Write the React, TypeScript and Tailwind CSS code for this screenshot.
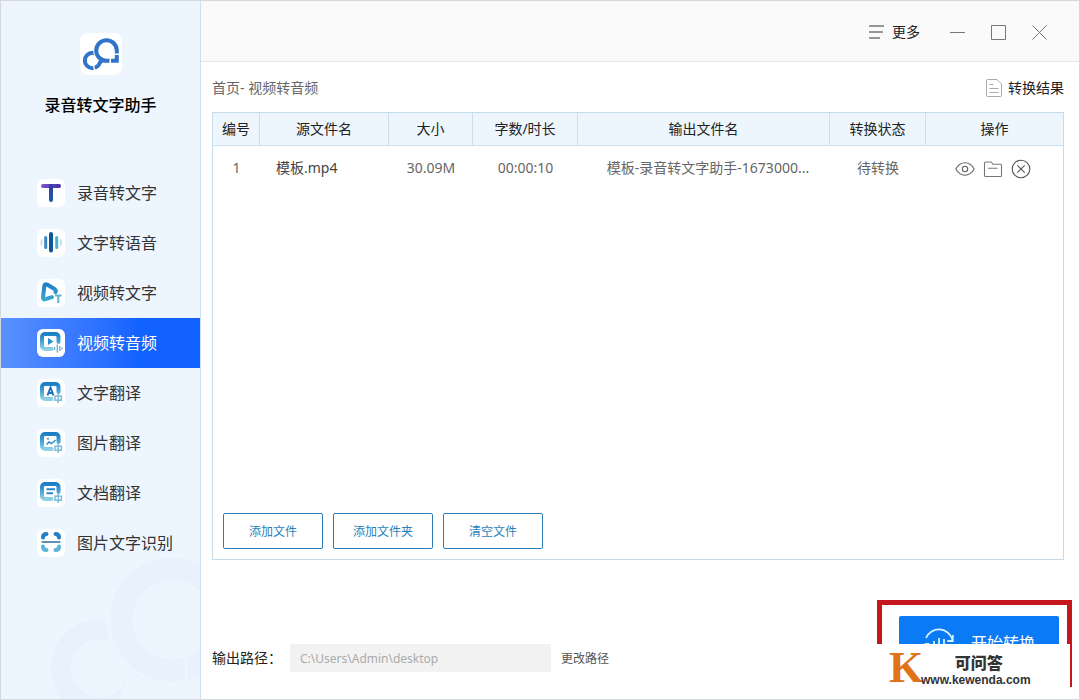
import React from "react";

type IconProps = { id: string };

function Zhong({ color = "#7dbbd8" }: { color?: string }) {
  return (
    <g fill="none" stroke={color} strokeWidth="1.5">
      <rect x="18" y="17.2" width="6.4" height="4" />
      <path d="M21.200 15v9" />
    </g>
  );
}

function ScreenFrame({ id }: IconProps) {
  return (
    <>
      <defs>
        <linearGradient id={id} x1="0" y1="0" x2="0" y2="1">
          <stop offset="0" stopColor="#1b7fc6" />
          <stop offset="0.5" stopColor="#49a5d2" />
          <stop offset="1" stopColor="#8fd0e4" />
        </linearGradient>
      </defs>
      <path
        d="M21.500 13V8A3 3 0 0 0 18.500 5H8A3 3 0 0 0 5 8V17A3 3 0 0 0 8 20H14.500"
        fill="none"
        stroke={`url(#${id})`}
        strokeWidth="4"
        strokeLinecap="round"
        strokeLinejoin="round"
      />
    </>
  );
}

function SpeechIcon() {
  return (
    <svg viewBox="0 0 28 28" className="size-7">
      <defs>
        <linearGradient id="tTop" x1="0" y1="0" x2="1" y2="0">
          <stop offset="0" stopColor="#7a57c8" />
          <stop offset="1" stopColor="#3d2fa8" />
        </linearGradient>
        <linearGradient id="tStem" x1="0" y1="0" x2="0" y2="1">
          <stop offset="0" stopColor="#3b35a8" />
          <stop offset="1" stopColor="#1a5fae" />
        </linearGradient>
      </defs>
      <rect x="4" y="5" width="20" height="4" rx="2" fill="url(#tTop)" />
      <rect x="12" y="5" width="4" height="18" rx="2" fill="url(#tStem)" />
    </svg>
  );
}

function WaveIcon() {
  return (
    <svg viewBox="0 0 28 28" className="size-7" strokeLinecap="round">
      <path d="M4.500 11v5M24 11v5" stroke="#a5dde8" strokeWidth="1.500" />
      <path d="M8.700 8.500v10" stroke="#3a86c4" strokeWidth="3" />
      <path d="M14 5v16.500" stroke="#0f5796" strokeWidth="4" />
      <path d="M19.700 8.500v10" stroke="#45b4cf" strokeWidth="3" />
    </svg>
  );
}

function VideoTextIcon() {
  return (
    <svg viewBox="0 0 28 28" className="size-7" fill="none" strokeLinejoin="round" strokeLinecap="round">
      <defs>
        <linearGradient id="vt" x1="0" y1="0" x2="0" y2="1">
          <stop offset="0" stopColor="#1f7fc8" />
          <stop offset="1" stopColor="#3aa6cf" />
        </linearGradient>
      </defs>
      <path d="M15 18.200L8.500 20.200Q6 21 6 18.500L7.300 7Q7.600 4.500 10 5.500L17.500 10Q19.500 11.500 18.500 13.200" stroke="url(#vt)" strokeWidth="4" />
      <path d="M18 16.500h6.500M21.300 16.500v7.500" stroke="#62b3d0" strokeWidth="2" strokeLinecap="butt" />
    </svg>
  );
}

function VideoAudioIcon() {
  return (
    <svg viewBox="0 0 28 28" className="size-7">
      <ScreenFrame id="va" />
      <path d="M11 9l5.500 3.500L11 16z" fill="#2a8fcd" />
      <path d="M17.500 18v3M20.300 15.500v8M22.800 17v5M25 18.500v2" stroke="#68b4d2" strokeWidth="1.400" />
    </svg>
  );
}

function TextTranslateIcon() {
  return (
    <svg viewBox="0 0 28 28" className="size-7">
      <ScreenFrame id="tx" />
      <path d="M10.500 16.500l3-8 3 8M11.700 14h3.800" fill="none" stroke="#1e6fb8" strokeWidth="1.900" />
      <Zhong />
    </svg>
  );
}

function ImageTranslateIcon() {
  return (
    <svg viewBox="0 0 28 28" className="size-7" fill="none">
      <ScreenFrame id="im" />
      <path d="M9.500 15.500l2.500-2.500 2.500 1.500 4-3.500" stroke="#3a8ec6" strokeWidth="1.600" />
      <circle cx="11" cy="9.800" r="1" fill="#3a8ec6" />
      <Zhong />
    </svg>
  );
}

function DocTranslateIcon() {
  return (
    <svg viewBox="0 0 28 28" className="size-7" fill="none">
      <ScreenFrame id="dc" />
      <path d="M9.500 10.300h8.500M9.500 14.300h6.500" stroke="#2a86c6" strokeWidth="2" />
      <Zhong />
    </svg>
  );
}

function ScanIcon() {
  return (
    <svg viewBox="0 0 28 28" className="size-7" fill="none" strokeLinecap="round">
      <path d="M6 8.500Q6 5 9.500 5M18.500 5Q22 5 22 8.500" stroke="#2180c6" strokeWidth="4" />
      <path d="M6 17.500Q6 21 9.500 21M18.500 21Q22 21 22 17.500" stroke="#5fb2da" strokeWidth="4" />
      <path d="M5 13h18" stroke="#2a6f9c" strokeWidth="1.300" />
    </svg>
  );
}

const navItems = [
  { label: "录音转文字", Icon: SpeechIcon },
  { label: "文字转语音", Icon: WaveIcon },
  { label: "视频转文字", Icon: VideoTextIcon },
  { label: "视频转音频", Icon: VideoAudioIcon, active: true },
  { label: "文字翻译", Icon: TextTranslateIcon },
  { label: "图片翻译", Icon: ImageTranslateIcon },
  { label: "文档翻译", Icon: DocTranslateIcon },
  { label: "图片文字识别", Icon: ScanIcon },
];

function Logo() {
  return (
    <svg viewBox="0 0 42 42" className="size-[42px] rounded-lg bg-white" fill="none" stroke="#2f74c8" strokeWidth="4">
      <circle cx="12.500" cy="27.500" r="7.700" />
      <path d="M13 30l1.800 8" stroke="#fff" strokeWidth="1.300" />
      <path d="M16.500 24.500l6 9 3-4z" fill="#fff" stroke="none" />
      <circle cx="26.500" cy="17.500" r="13.300" fill="#fff" stroke="none" />
      <path d="M19 31l3-3.500" strokeWidth="3.500" />
      <path d="M36.800 20.500V17.500A10.300 10.300 0 1 0 26.500 27.800H29.500" />
      <path d="M31 27.800H36.800V22" />
    </svg>
  );
}

function Sidebar() {
  return (
    <aside className="relative flex w-[200px] shrink-0 flex-col items-center border-r border-[#cfdfec] bg-[#edf6fe] pt-8">
      <svg
        viewBox="0 0 200 160"
        className="pointer-events-none absolute bottom-0 left-0 w-full"
        fill="none"
        stroke="#e8f1fc"
        aria-hidden="true"
      >
        <circle cx="99" cy="129" r="39" strokeWidth="20" />
        <path d="M118 162l12-30 40 30z" fill="#edf6fe" stroke="none" />
        <circle cx="172" cy="80" r="67" fill="#edf6fe" stroke="none" />
        <circle cx="172" cy="80" r="51" strokeWidth="22" />
        <path d="M186 120v24" stroke="#edf6fe" strokeWidth="3" />
      </svg>
      <Logo />
      <h1 className="mt-[18px] text-base leading-6 font-medium text-black">录音转文字助手</h1>
      <nav className="relative mt-[51px] flex w-full flex-col">
        {navItems.map(({ label, Icon, active }) => (
          <a
            key={label}
            href="#"
            aria-current={active ? "page" : undefined}
            className={
              active
                ? "flex h-[50px] items-center gap-3 bg-linear-to-r from-[#5a90ff] to-[#1262ff] to-70% pl-9 text-base text-white"
                : "flex h-[50px] items-center gap-3 pl-9 text-base text-[#333]"
            }
          >
            <span className="rounded-md bg-white">
              <Icon />
            </span>
            {label}
          </a>
        ))}
      </nav>
    </aside>
  );
}

function TitleBar() {
  return (
    <header className="flex h-[61px] shrink-0 items-center justify-end border-b border-[#e6e6e6] bg-[#fafafa] pt-0.5 pr-8">
      <button className="flex items-center gap-2 text-sm text-[#222]">
        <svg viewBox="0 0 15 14" className="h-3.5 w-[15px]" stroke="#777" strokeWidth="1.400">
          <path d="M0 1h15M0 7h14M0 13h11" />
        </svg>
        更多
      </button>
      <div className="ml-[30px] flex items-center gap-[26px]">
        <button aria-label="最小化">
          <svg viewBox="0 0 15 15" className="size-[15px]" stroke="#777">
            <path d="M0 7.500h15" />
          </svg>
        </button>
        <button aria-label="最大化">
          <svg viewBox="0 0 15 15" className="size-[15px]" stroke="#777" fill="none">
            <path d="M.5.5h14v14h-14z" />
          </svg>
        </button>
        <button aria-label="关闭">
          <svg viewBox="0 0 15 15" className="size-[15px]" stroke="#777">
            <path d="M.5.5l14 14M14.500.5l-14 14" />
          </svg>
        </button>
      </div>
    </header>
  );
}

const columns = [
  { label: "编号", width: "w-[47px]" },
  { label: "源文件名", width: "w-[129px]" },
  { label: "大小", width: "w-[84px]" },
  { label: "字数/时长", width: "w-[105px]" },
  { label: "输出文件名", width: "" },
  { label: "转换状态", width: "w-[96px]" },
  { label: "操作", width: "w-[137px]" },
];

function FileTable() {
  return (
    <table className="w-full table-fixed border-separate border-spacing-0 text-sm">
      <thead>
        <tr>
          {columns.map((c) => (
            <th
              key={c.label}
              className={`h-[33px] border-r border-b border-[#cbdfee] bg-[#eef6fd] p-0 font-normal text-[#222] last:border-r-0 ${c.width}`}
            >
              {c.label}
            </th>
          ))}
        </tr>
      </thead>
      <tbody>
        <tr className="h-11 text-center text-[#666]">
          <td>1</td>
          <td className="pl-4 text-left text-[#444]">模板.mp4</td>
          <td>30.09M</td>
          <td>00:00:10</td>
          <td className="truncate pl-2">模板-录音转文字助手-1673000...</td>
          <td>待转换</td>
          <td>
            <div className="flex items-center justify-center gap-2 pt-0.5 pr-1">
              <button aria-label="查看">
                <svg viewBox="0 0 20 20" className="size-5" fill="none" stroke="#666" strokeWidth="1.100">
                  <path d="M.8 10Q4.500 3.800 10 3.800T19.200 10Q15.500 16.200 10 16.200T.8 10z" />
                  <circle cx="10" cy="10" r="2.700" />
                </svg>
              </button>
              <button aria-label="打开文件夹">
                <svg viewBox="0 0 20 20" className="size-5" fill="none" stroke="#777" strokeWidth="1.100">
                  <path d="M2.500 17.500h15q1 0 1-1V6.300q0-1-1-1H10L8.200 3H2.500q-1 0-1 1v12.500q0 1 1 1zM5 9.300h9.500" />
                </svg>
              </button>
              <button aria-label="删除">
                <svg viewBox="0 0 20 20" className="size-5" fill="none" stroke="#555" strokeWidth="1.100">
                  <circle cx="10" cy="10" r="8.800" />
                  <path d="M6.300 6.300l7.400 7.400M13.700 6.300l-7.400 7.400" />
                </svg>
              </button>
            </div>
          </td>
        </tr>
      </tbody>
    </table>
  );
}

function Watermark() {
  return (
    <div className="absolute right-[9px] bottom-0 flex h-[55px] w-[194px] bg-white pl-[13px]">
      <span className="w-8 font-['Liberation_Serif',serif] text-[44px] leading-[48px] font-bold text-[#e07318]">K</span>
      <div className="flex flex-col items-center pt-[11px] font-['Liberation_Sans','Noto_Sans_CJK_SC',sans-serif] font-bold text-[#333]">
        <span className="pl-1.5 text-base leading-[18px] font-black">可问答</span>
        <span className="text-xs leading-3.5">www.kewenda.com</span>
      </div>
    </div>
  );
}

function Footer() {
  return (
    <footer className="relative flex h-[139px] shrink-0 justify-between pt-10 pr-[7px]">
      <div className="mt-11 flex h-7 items-center self-start pl-[11px]">
        <label htmlFor="output" className="w-[78px] text-sm text-[#222]">
          输出路径：
        </label>
        <input
          id="output"
          readOnly
          value={"C:\\Users\\Admin\\desktop"}
          className="h-7 w-[261px] bg-[#f2f2f2] px-2.5 text-xs text-[#aaa] outline-none"
        />
        <button className="ml-2.5 pt-0.5 text-xs text-[#555]">更改路径</button>
      </div>
      <div className="h-[87px] border-5 border-[#c4161c] pt-[11px] pr-2 pl-[17px]">
        <button className="flex h-[54px] w-[160px] items-center justify-center gap-4 rounded-xs bg-[#0a7af5] text-base text-white">
          <svg viewBox="0 0 32 32" className="size-8" fill="none" stroke="#d5f1ff" strokeWidth="1.800">
            <path d="M3 11A14 14 0 0 1 29.500 13M29.800 8v6h-5.500M29 20A14 14 0 0 1 2.500 18M2.500 23v-6h4" />
            <path d="M11 14v6M16 11v12M21 12v8" />
          </svg>
          开始转换
        </button>
      </div>
      <Watermark />
    </footer>
  );
}

export default function App() {
  return (
    <div className="flex min-h-screen border border-[#d5d9dd] bg-white font-['Noto_Sans','Noto_Sans_CJK_SC',sans-serif]">
      <Sidebar />
      <div className="flex min-w-0 flex-1 flex-col">
        <TitleBar />
        <main className="flex flex-1 flex-col pr-[15px] pl-[11px]">
          <div className="flex h-[50px] items-center justify-between pt-0.5 text-sm">
            <span className="text-[#666]">首页- 视频转音频</span>
            <a href="#" className="flex items-center gap-1.5 text-[#222]">
              <svg viewBox="0 0 16 18" className="h-[18px] w-4" fill="none" stroke="#aaa">
                <path d="M1.500.5h9.500L15.500 5v11.500q0 1-1 1h-13q-1 0-1-1v-15q0-1 1-1zM3.500 5.500h4M3.500 9.500h9M3.500 13.500h9" />
              </svg>
              转换结果
            </a>
          </div>
          <section className="flex flex-1 flex-col border border-[#c5dcec]">
            <FileTable />
            <div className="mt-auto flex gap-2.5 p-2.5">
              {["添加文件", "添加文件夹", "清空文件"].map((label) => (
                <button
                  key={label}
                  className="h-9 w-[100px] rounded-xs border border-[#2a7fb8] pt-0.5 text-xs text-[#2a7fb8]"
                >
                  {label}
                </button>
              ))}
            </div>
          </section>
        </main>
        <Footer />
      </div>
    </div>
  );
}
